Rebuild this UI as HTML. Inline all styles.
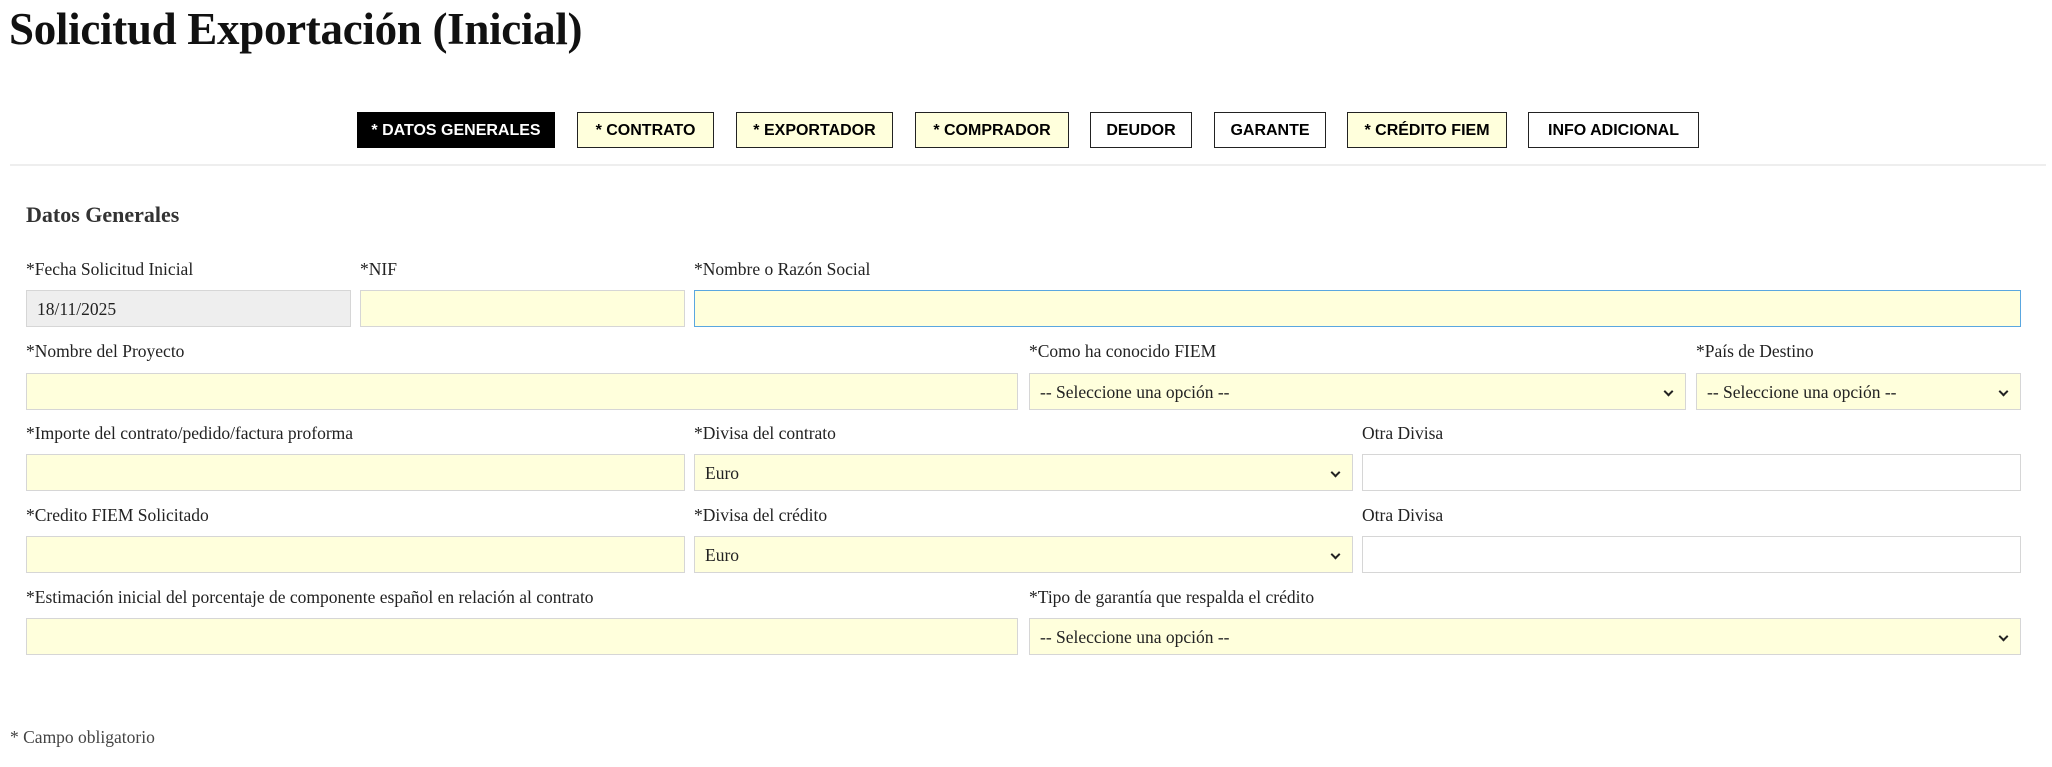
<!DOCTYPE html>
<html><head><meta charset="utf-8"><style>
body{margin:0;width:2052px;height:767px;background:#fff;position:relative;overflow:hidden;font-family:"Liberation Serif",serif;color:#222}
.a{position:absolute}
h1{position:absolute;left:9px;top:1px;margin:0;font-size:45px;line-height:56px;font-weight:bold;color:#111;letter-spacing:-0.3px}
.tab{position:absolute;top:112px;height:36px;box-sizing:border-box;border:1.5px solid #222;background:#ffffdc;font-family:"Liberation Sans",sans-serif;font-weight:bold;font-size:16px;line-height:35px;text-align:center;color:#000}
.lbl{position:absolute;font-size:17.5px;line-height:20px;color:#222}
.in{position:absolute;height:37px;box-sizing:border-box;border:1px solid #d6d6d6;background:#ffffdc;font-size:17.5px;line-height:36px;padding-left:10px;color:#222}
.sel::after{content:"";position:absolute;right:13px;top:14px;width:5px;height:5px;border-right:2.5px solid #222;border-bottom:2.5px solid #222;transform:rotate(45deg)}
</style></head><body>
<h1>Solicitud Exportación (Inicial)</h1>
<div class="tab" style="left:357px;width:198px;background:#000;color:#fff;border-color:#000">* DATOS GENERALES</div>
<div class="tab" style="left:577px;width:137px">* CONTRATO</div>
<div class="tab" style="left:736px;width:157px">* EXPORTADOR</div>
<div class="tab" style="left:915px;width:154px">* COMPRADOR</div>
<div class="tab" style="left:1090px;width:102px;background:#fff">DEUDOR</div>
<div class="tab" style="left:1214px;width:112px;background:#fff">GARANTE</div>
<div class="tab" style="left:1347px;width:160px">* CRÉDITO FIEM</div>
<div class="tab" style="left:1528px;width:171px;background:#fff">INFO ADICIONAL</div>
<div class="a" style="left:10px;top:164px;width:2036px;height:2px;background:#eee"></div>
<div class="a" style="left:26px;top:202px;font-size:22px;font-weight:bold;color:#333">Datos Generales</div>

<div class="lbl" style="left:26px;top:259px">*Fecha Solicitud Inicial</div>
<div class="lbl" style="left:360px;top:259px">*NIF</div>
<div class="lbl" style="left:694px;top:259px">*Nombre o Razón Social</div>
<div class="in" style="left:26px;top:290px;width:325px;background:#eee">18/11/2025</div>
<div class="in" style="left:360px;top:290px;width:325px"></div>
<div class="in" style="left:694px;top:290px;width:1327px;border-color:#5aa7e0"></div>

<div class="lbl" style="left:26px;top:341px">*Nombre del Proyecto</div>
<div class="lbl" style="left:1029px;top:341px">*Como ha conocido FIEM</div>
<div class="lbl" style="left:1696px;top:341px">*País de Destino</div>
<div class="in" style="left:26px;top:373px;width:992px"></div>
<div class="in sel" style="left:1029px;top:373px;width:657px">-- Seleccione una opción --</div>
<div class="in sel" style="left:1696px;top:373px;width:325px">-- Seleccione una opción --</div>

<div class="lbl" style="left:26px;top:423px">*Importe del contrato/pedido/factura proforma</div>
<div class="lbl" style="left:694px;top:423px">*Divisa del contrato</div>
<div class="lbl" style="left:1362px;top:423px">Otra Divisa</div>
<div class="in" style="left:26px;top:454px;width:659px"></div>
<div class="in sel" style="left:694px;top:454px;width:659px">Euro</div>
<div class="in" style="left:1362px;top:454px;width:659px;background:#fff"></div>

<div class="lbl" style="left:26px;top:505px">*Credito FIEM Solicitado</div>
<div class="lbl" style="left:694px;top:505px">*Divisa del crédito</div>
<div class="lbl" style="left:1362px;top:505px">Otra Divisa</div>
<div class="in" style="left:26px;top:536px;width:659px"></div>
<div class="in sel" style="left:694px;top:536px;width:659px">Euro</div>
<div class="in" style="left:1362px;top:536px;width:659px;background:#fff"></div>

<div class="lbl" style="left:26px;top:587px">*Estimación inicial del porcentaje de componente español en relación al contrato</div>
<div class="lbl" style="left:1029px;top:587px">*Tipo de garantía que respalda el crédito</div>
<div class="in" style="left:26px;top:618px;width:992px"></div>
<div class="in sel" style="left:1029px;top:618px;width:992px">-- Seleccione una opción --</div>

<div class="a" style="left:10px;top:727px;font-size:17.5px;color:#444">* Campo obligatorio</div>
</body></html>
